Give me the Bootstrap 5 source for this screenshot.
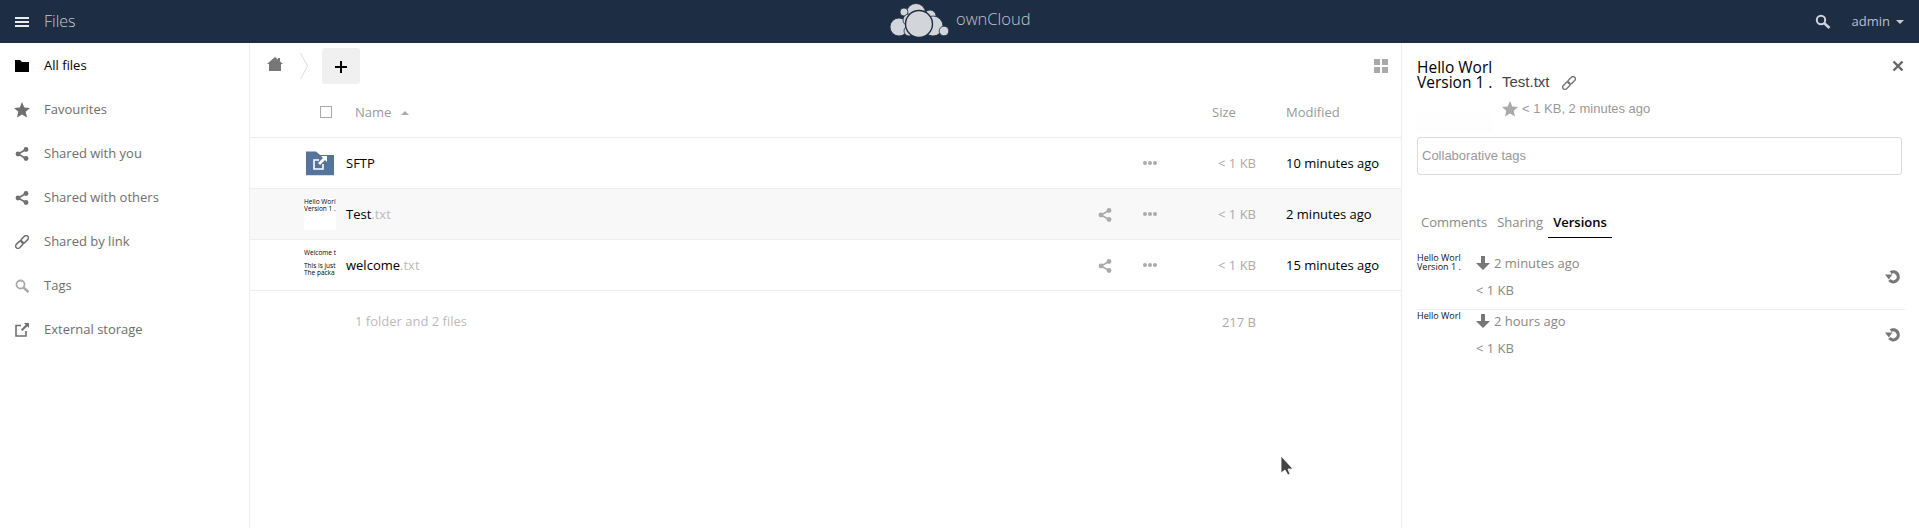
<!DOCTYPE html>
<html lang="en"><head><meta charset="utf-8"><title>Files - ownCloud</title>
<link href="https://cdn.jsdelivr.net/npm/bootstrap@5.3.0/dist/css/bootstrap.min.css" rel="stylesheet">
<style>
html,body{height:528px;overflow:hidden}
body{font-family:"Open Sans",sans-serif;font-size:13px;color:#000;background:#fff}
.oc-top{height:43px;background:#1d2d44;color:#fff}
.oc-menu{margin-left:15px;width:14px;height:14px}
.oc-appname{margin-left:15px;margin-top:-2px;font-size:16px;font-weight:300;color:#c4c9d0;width:40px}
.oc-logo{position:absolute;left:890px;top:3px}
.oc-brand{position:absolute;left:956px;top:8px;font-size:16.5px;font-weight:300;color:#c0c5cc;line-height:22px}
.oc-user{color:#b8c0ca;margin-left:21px}
.oc-caret{width:0;height:0;border-left:4px solid transparent;border-right:4px solid transparent;border-top:4px solid #c8ccd2;margin-left:6px;margin-right:15px;margin-top:1px}
.oc-body{height:485px}
.oc-side{width:250px;border-right:1px solid #eee;flex:none;padding-top:1px}
.oc-nav{height:44px;padding-left:15px;color:#6e6e6e;gap:15px}
.oc-nav.is-on{color:#000}
.oc-nav svg{width:14px;height:14px;flex:none}
.oc-nav svg.oc-navstar{width:16px;height:16px;margin:0 -1px}
.oc-main{width:1152px;flex:none;border-right:1px solid #eee}
.oc-crumbs{height:42px;padding-top:5px}
.oc-home{margin-left:17px;width:16px;height:14px;margin-top:-5px}
.oc-sep{margin-left:17px;margin-top:-2px;width:8px;height:26px}
.oc-add{width:38px;height:36px;background:#f0f0f0;border-radius:3px;margin-left:14px;border:0;padding:1px 0 0}
.oc-grid{position:absolute;right:13px;top:16px;width:14px;height:14px}
.oc-head{height:53px;border-bottom:1px solid #eee;color:#999;padding-top:4px}
.oc-check{width:12px;height:12px;border:1px solid #aaa;margin-left:70px;margin-right:23px;margin-top:-2px}
.oc-sort{width:0;height:0;border-left:4px solid transparent;border-right:4px solid transparent;border-bottom:4px solid #aaa;margin-left:10px}
.oc-row{height:51px;border-bottom:1px solid #eee}
.oc-row.is-hover{background:#f8f8f8}
.oc-thumbbox{margin-left:54px;width:32px;height:32px;flex:none;background:#fff;overflow:hidden;font-size:6.5px;line-height:6.5px;white-space:nowrap;color:#000;padding-top:1px}
.oc-thumbbox.is-icon{background:transparent;padding:0}
.oc-fname{margin-left:10px;margin-top:2px}
.oc-ext{color:#bbb}
.oc-act{width:45px;flex:none}
.oc-actshare{width:14px;height:14px}
.oc-dots{width:36px;flex:none}
.oc-size{width:78px;text-align:right;color:#aaa;flex:none;padding-right:1px;margin-top:2px}
.oc-mod{width:115px;padding-left:29px;flex:none;box-sizing:content-box;margin-top:2px}
.oc-c-size{margin-left:auto;width:45px;text-align:left}
.oc-c-mod{width:115px;padding-left:29px;box-sizing:content-box}
.oc-sum{color:#bbb;height:62px}
.oc-sumtext{margin-left:105px}
.oc-panel{flex:1;position:relative;padding:15px 14px 0 15px;min-width:0}
.oc-pthumb{width:75px;height:75px;font-size:15.5px;line-height:15px;padding-top:2px;white-space:nowrap;overflow:hidden;background:linear-gradient(#fff 0 45px,#fdfdfd);flex:none}
.oc-ptitle{font-family:"Liberation Sans",sans-serif;font-size:15px;color:#444;margin-left:10px;padding-top:13px}
.oc-plink{margin-left:12px;margin-top:5px}
.oc-pmeta{color:#999;position:absolute;left:100px;top:57px;font-family:"Liberation Sans",sans-serif;line-height:18px}
.oc-close{position:absolute;right:15px;top:17px;width:12px;height:12px}
.oc-tags{height:38px;width:485px;margin-top:4px;border:1px solid #dbdbdb;border-radius:3px;font-family:"Liberation Sans",sans-serif;font-size:13px;color:#999;padding:0 4px}
.oc-tabs{margin-top:34px;margin-left:-1px;height:43px}
.oc-tab{padding:4px 5px 0;color:#888;line-height:18px;height:29px}
.oc-tab.is-on{color:#000;font-weight:600;border-bottom:1px solid #000}
.oc-ver{height:57px;position:relative}
.oc-ver+.oc-ver{border-top:1px solid #eee}
.oc-vthumb{width:44px;font-size:9px;line-height:8.7px;white-space:nowrap;overflow:hidden;color:#111;height:44px;padding-top:2px;flex:none}
.oc-vinfo{margin-left:15px;color:#888;padding-top:2px}
.oc-vtime{line-height:18px;height:18px;margin-bottom:9px}
.oc-vsize{line-height:18px}
.oc-restore{position:absolute;right:4px;top:17px;width:16px;height:15px}
.oc-cursor{position:absolute;left:1280px;top:455px;width:14px;height:21px}
</style></head><body>
<div class="oc-top d-flex align-items-center position-relative">
<svg class="oc-menu" viewBox="0 0 14 14"><path d="M0 2h14v2H0zM0 6h14v2H0zM0 10h14v2H0z" fill="#e8eaec"/></svg>
<span class="oc-appname">Files</span>
<svg class="oc-logo" width="60" height="34" viewBox="0 0 60 34"><g fill="#d2d6db" stroke="#1d2d44" stroke-width=".8"><circle cx="26" cy="10" r="9.5"/><circle cx="14" cy="9" r="4"/><circle cx="40" cy="13" r="6"/><circle cx="9" cy="24" r="9"/><circle cx="19" cy="17" r="6"/><circle cx="43" cy="23" r="10"/><circle cx="19" cy="28" r="5"/><circle cx="54" cy="28" r="4.8"/><circle cx="29" cy="21" r="13.5" stroke-width="1.4"/></g></svg>
<span class="oc-brand">ownCloud</span>
<div class="ms-auto d-flex align-items-center">
<svg width="16" height="16" viewBox="0 0 16 16"><circle cx="6" cy="6" r="4.2" fill="none" stroke="#d0d4d9" stroke-width="2"/><path d="M9 9l5.5 5" stroke="#d0d4d9" stroke-width="2.6"/></svg>
<span class="oc-user">admin</span><span class="oc-caret"></span>
</div></div>
<div class="oc-body d-flex">
<nav class="oc-side">
<div class="oc-nav d-flex align-items-center is-on"><svg viewBox="0 0 14 14"><path d="M0 1h5l2 2h7v10H0z" fill="#000"/></svg>All files</div>
<div class="oc-nav d-flex align-items-center"><svg class="oc-navstar" viewBox="0 0 16 16"><path d="M8 0l2.3 5.4 5.7.5-4.3 3.8 1.3 5.8L8 12.4l-5 3.1 1.3-5.8L0 5.9l5.7-.5z" fill="#707070"/></svg>Favourites</div>
<div class="oc-nav d-flex align-items-center"><svg viewBox="0 0 14 14"><path d="M11 2.5L3 7l8 4.5" fill="none" stroke="#707070" stroke-width="1.6"/><circle cx="11" cy="2.5" r="2.4" fill="#707070"/><circle cx="3" cy="7" r="2.4" fill="#707070"/><circle cx="11" cy="11.5" r="2.4" fill="#707070"/></svg>Shared with you</div>
<div class="oc-nav d-flex align-items-center"><svg viewBox="0 0 14 14"><path d="M11 2.5L3 7l8 4.5" fill="none" stroke="#707070" stroke-width="1.6"/><circle cx="11" cy="2.5" r="2.4" fill="#707070"/><circle cx="3" cy="7" r="2.4" fill="#707070"/><circle cx="11" cy="11.5" r="2.4" fill="#707070"/></svg>Shared with others</div>
<div class="oc-nav d-flex align-items-center"><svg viewBox="0 0 14 14"><g fill="none" stroke="#707070" stroke-width="1.5" transform="rotate(-45 7 7)"><rect x="-1" y="4.7" width="8.5" height="4.6" rx="2.3"/><rect x="6.5" y="4.7" width="8.5" height="4.6" rx="2.3"/></g></svg>Shared by link</div>
<div class="oc-nav d-flex align-items-center"><svg viewBox="0 0 14 14"><circle cx="5.5" cy="5.5" r="4" fill="none" stroke="#aaa" stroke-width="1.8"/><path d="M8.5 8.5l5 4.5" stroke="#aaa" stroke-width="2.4"/></svg>Tags</div>
<div class="oc-nav d-flex align-items-center"><svg viewBox="0 0 14 14"><path d="M6 2.5H1v10.5h10V8" fill="none" stroke="#707070" stroke-width="1.6"/><path d="M9 0h5v5l-1.7-1.7L7.5 8 6 6.5l4.7-4.8z" fill="#707070"/></svg>External storage</div>
</nav>
<main class="oc-main position-relative">
<div class="oc-crumbs d-flex align-items-center">
<svg class="oc-home" viewBox="0 0 16 14"><path d="M8 0l8 7h-2v7H2V7H0z M11 1h2v3h-2z" fill="#777"/></svg>
<svg class="oc-sep" viewBox="0 0 8 26"><path d="M.5 0l7 13-7 13" fill="none" stroke="#ddd"/></svg>
<button type="button" class="oc-add d-flex align-items-center justify-content-center align-self-start" aria-label="New"><svg width="12" height="12" viewBox="0 0 12 12"><path d="M5 0h2v12H5zM0 5h12v2H0z" fill="#000"/></svg></button>
</div>
<svg class="oc-grid" viewBox="0 0 14 14"><path d="M0 0h6v6H0zM8 0h6v6H8zM0 8h6v6H0zM8 8h6v6H8z" fill="#aaa"/></svg>
<div class="oc-head d-flex align-items-center">
<span class="oc-check"></span><span>Name</span><span class="oc-sort"></span>
<span class="oc-c-size">Size</span><span class="oc-c-mod">Modified</span>
</div>
<div class="oc-row d-flex align-items-center">
<div class="oc-thumbbox is-icon"><svg width="32" height="32" viewBox="0 0 32 32"><path d="M2 4h10l4 4h14v24H2z" transform="translate(0 -1) scale(1 .85) translate(0 2.5)" fill="#55749c"/><path d="M15 13h-5v9h9v-5" fill="none" stroke="#fff" stroke-width="1.6"/><path d="M17 9h6v6l-2-2-5 5-2-2 5-5z" fill="#fff"/></svg></div>
<span class="oc-fname">SFTP</span>
<span class="ms-auto oc-act"></span>
<span class="oc-dots d-flex"><svg width="14" height="4" viewBox="0 0 14 4"><g fill="#aaa"><circle cx="2" cy="2" r="2"/><circle cx="7" cy="2" r="2"/><circle cx="12" cy="2" r="2"/></g></svg></span>
<span class="oc-size">&lt; 1 KB</span><span class="oc-mod">10 minutes ago</span>
</div>
<div class="oc-row d-flex align-items-center is-hover">
<div class="oc-thumbbox">Hello Worl<br>Version 1 .</div>
<span class="oc-fname">Test<span class="oc-ext">.txt</span></span>
<span class="ms-auto oc-act"><svg class="oc-actshare" viewBox="0 0 14 14"><path d="M11 2.5L3 7l8 4.5" fill="none" stroke="#aaa" stroke-width="1.6"/><circle cx="11" cy="2.5" r="2.4" fill="#aaa"/><circle cx="3" cy="7" r="2.4" fill="#aaa"/><circle cx="11" cy="11.5" r="2.4" fill="#aaa"/></svg></span>
<span class="oc-dots d-flex"><svg width="14" height="4" viewBox="0 0 14 4"><g fill="#aaa"><circle cx="2" cy="2" r="2"/><circle cx="7" cy="2" r="2"/><circle cx="12" cy="2" r="2"/></g></svg></span>
<span class="oc-size">&lt; 1 KB</span><span class="oc-mod">2 minutes ago</span>
</div>
<div class="oc-row d-flex align-items-center">
<div class="oc-thumbbox">Welcome t<br><br>This is just<br>The packa</div>
<span class="oc-fname">welcome<span class="oc-ext">.txt</span></span>
<span class="ms-auto oc-act"><svg class="oc-actshare" viewBox="0 0 14 14"><path d="M11 2.5L3 7l8 4.5" fill="none" stroke="#aaa" stroke-width="1.6"/><circle cx="11" cy="2.5" r="2.4" fill="#aaa"/><circle cx="3" cy="7" r="2.4" fill="#aaa"/><circle cx="11" cy="11.5" r="2.4" fill="#aaa"/></svg></span>
<span class="oc-dots d-flex"><svg width="14" height="4" viewBox="0 0 14 4"><g fill="#aaa"><circle cx="2" cy="2" r="2"/><circle cx="7" cy="2" r="2"/><circle cx="12" cy="2" r="2"/></g></svg></span>
<span class="oc-size">&lt; 1 KB</span><span class="oc-mod">15 minutes ago</span>
</div>
<div class="oc-sum d-flex align-items-center">
<span class="oc-sumtext">1 folder and 2 files</span>
<span class="ms-auto oc-size">217 B</span><span class="oc-mod"></span>
</div>
</main>
<aside class="oc-panel">
<div class="d-flex">
<div class="oc-pthumb">Hello Worl<br>Version 1 .</div>
<div class="oc-ptitle d-flex align-items-start">Test.txt<svg class="oc-plink" width="14" height="14" viewBox="0 0 14 14"><g fill="none" stroke="#777" stroke-width="1.4" transform="rotate(-45 7 7)"><rect x="-1" y="4.7" width="8.5" height="4.6" rx="2.3"/><rect x="6.5" y="4.7" width="8.5" height="4.6" rx="2.3"/></g></svg></div>
</div>
<div class="oc-pmeta d-flex align-items-center"><svg class="me-1" width="16" height="16" viewBox="0 0 16 16"><path d="M8 0l2.3 5.4 5.7.5-4.3 3.8 1.3 5.8L8 12.4l-5 3.1 1.3-5.8L0 5.9l5.7-.5z" fill="#aaa"/></svg>&lt; 1 KB, 2 minutes ago</div>
<svg class="oc-close" viewBox="0 0 12 12"><path d="M1.5 1.5l9 9M10.5 1.5l-9 9" stroke="#666" stroke-width="2.4"/></svg>
<div class="oc-tags d-flex align-items-center">Collaborative tags</div>
<div class="oc-tabs d-flex">
<div class="oc-tab">Comments</div><div class="oc-tab">Sharing</div><div class="oc-tab is-on">Versions</div>
</div>
<div class="oc-ver d-flex">
<div class="oc-vthumb">Hello Worl<br>Version 1 .</div>
<div class="oc-vinfo"><div class="oc-vtime d-flex align-items-center"><svg class="me-1" width="14" height="14" viewBox="0 0 14 14"><path d="M5 0h4v7h5l-7 7-7-7h5z" fill="#777"/></svg>2 minutes ago</div><div class="oc-vsize">&lt; 1 KB</div></div>
<svg class="oc-restore" viewBox="0 0 16 15"><path d="M5.6 3.6a5 5 0 1 1-1.2 7.4" fill="none" stroke="#777" stroke-width="3.2"/><path d="M0 5.5h7.5L3.8 10.5z" fill="#777"/></svg>
</div>
<div class="oc-ver d-flex">
<div class="oc-vthumb">Hello Worl</div>
<div class="oc-vinfo"><div class="oc-vtime d-flex align-items-center"><svg class="me-1" width="14" height="14" viewBox="0 0 14 14"><path d="M5 0h4v7h5l-7 7-7-7h5z" fill="#777"/></svg>2 hours ago</div><div class="oc-vsize">&lt; 1 KB</div></div>
<svg class="oc-restore" viewBox="0 0 16 15"><path d="M5.6 3.6a5 5 0 1 1-1.2 7.4" fill="none" stroke="#777" stroke-width="3.2"/><path d="M0 5.5h7.5L3.8 10.5z" fill="#777"/></svg>
</div>
</aside>
</div>
<svg class="oc-cursor" viewBox="0 0 14 21"><path d="M1 1l12 13H8l2 5-2 1-3-5-4 3z" fill="#444" stroke="#fff" stroke-width=".8"/></svg>
</body></html>
